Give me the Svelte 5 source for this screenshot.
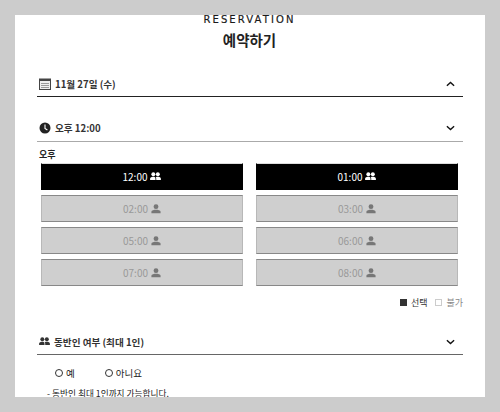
<script>
  const slots = [
    { time: '12:00', open: true },
    { time: '01:00', open: true },
    { time: '02:00', open: false },
    { time: '03:00', open: false },
    { time: '05:00', open: false },
    { time: '06:00', open: false },
    { time: '07:00', open: false },
    { time: '08:00', open: false }
  ];
</script>

{#snippet person()}
  <svg class="ico" viewBox="0 0 12 12" width="10" height="10">
    <circle cx="6" cy="3.2" r="2.9" fill="#777" />
    <path d="M0.5 11 V9.4 C0.5 7.6 4 6.9 6 6.9 S11.5 7.6 11.5 9.4 V11 Z" fill="#777" />
  </svg>
{/snippet}

{#snippet people()}
  <svg class="ico" viewBox="0 0 12 10" width="11" height="9">
    <circle cx="3.6" cy="2.4" r="2.2" fill="currentColor" />
    <circle cx="8.6" cy="2.4" r="2.2" fill="currentColor" />
    <path d="M0 9 V7.4 C0 6 2 5.4 3.6 5.4 S6 6 6 7.4 V9 Z" fill="currentColor" />
    <path d="M6.8 9 V7.2 C6.8 6.6 6.6 6.1 6.2 5.8 C6.9 5.5 7.8 5.4 8.6 5.4 C10.2 5.4 12 6 12 7.4 V9 Z" fill="currentColor" />
  </svg>
{/snippet}

{#snippet chevron(up)}
  <svg class="chev" viewBox="0 0 10 6" width="9" height="6">
    <path d={up ? 'M1 5 L5 1.4 L9 5' : 'M1 1 L5 4.6 L9 1'} fill="none" stroke="#111" stroke-width="1.6" />
  </svg>
{/snippet}

<div class="panel">
  <header>
    <div class="brand">RESERVATION</div>
    <h1>예약하기</h1>
  </header>

  <section class="row date">
    <div class="label">
      <svg class="ico" viewBox="0 0 12 12" width="12" height="12">
        <rect x="0.5" y="1" width="11" height="10.5" fill="#eee" stroke="#444" />
        <rect x="0.5" y="1" width="11" height="2" fill="#444" />
        <path d="M2.5 5.5h7M2.5 7.5h7M2.5 9.5h7" stroke="#444" stroke-dasharray="1 1" />
      </svg>
      <span>11월 27일 (수)</span>
    </div>
    {@render chevron(true)}
  </section>

  <section class="row time">
    <div class="label">
      <svg class="ico" viewBox="0 0 12 12" width="12" height="12">
        <circle cx="6" cy="6" r="5.5" fill="#222" />
        <path d="M6 2.6 V6.4 L8.4 8" fill="none" stroke="#fff" stroke-width="1.1" />
      </svg>
      <span>오후 12:00</span>
    </div>
    {@render chevron(false)}
  </section>

  <div class="period">오후</div>
  <div class="slots">
    {#each slots as slot}
      <button class="slot" class:open={slot.open}>
        <span>{slot.time}</span>
        {#if slot.open}
          {@render people()}
        {:else}
          {@render person()}
        {/if}
      </button>
    {/each}
  </div>

  <div class="legend">
    <i class="box on"></i><span class="sel">선택</span>
    <i class="box"></i><span class="off">불가</span>
  </div>

  <section class="row companion">
    <div class="label">
      {@render people()}
      <span>동반인 여부 (최대 1인)</span>
    </div>
    {@render chevron(false)}
  </section>

  <div class="radios">
    <label><i class="radio"></i>예</label>
    <label><i class="radio"></i>아니요</label>
  </div>
  <p class="note">- 동반인 최대 1인까지 가능합니다.</p>
</div>

<style>
  :global(body) {
    margin: 0;
    background: #ccc;
  }

  .panel {
    box-sizing: border-box;
    width: 470px;
    height: 382px;
    margin: 15px;
    padding: 0 22px;
    overflow: hidden;
    background: #fff;
    color: #222;
    font-family: "Noto Sans CJK KR", "Noto Sans", sans-serif;
    font-size: 9px;
  }

  header {
    padding-right: 1px;
    text-align: center;
  }

  .brand {
    height: 10px;
    font-family: "DejaVu Sans", sans-serif;
    font-size: 10px;
    line-height: 9px;
    letter-spacing: 2.1px;
    color: #1a1a1a;
    -webkit-text-stroke: 0.2px #1a1a1a;
  }

  h1 {
    margin: 4px 0 0;
    font-size: 14.5px;
    line-height: 21px;
    font-weight: 700;
  }

  .row {
    display: flex;
    align-items: center;
    justify-content: space-between;
    box-sizing: border-box;
    padding: 0 8px 0 2px;
    border-bottom: 1px solid #222;
  }

  .date {
    height: 41px;
    margin-top: 6px;
    padding-top: 16px;
  }

  .time {
    height: 45px;
    padding-top: 18px;
    border-bottom: 1px solid #aaa;
  }

  .companion {
    height: 26px;
    margin-top: 20px;
    border-bottom: 1px solid #666;
  }

  .label {
    display: flex;
    align-items: center;
    gap: 4px;
    font-size: 9.6px;
    font-weight: 700;
    color: #333;
  }

  .ico {
    display: block;
    flex: none;
  }

  .period {
    margin: 6px 0 0 2px;
    font-size: 9px;
    line-height: 13px;
    font-weight: 700;
  }

  .slots {
    display: grid;
    grid-template-columns: 202px 202px;
    column-gap: 13px;
    row-gap: 5px;
    margin: 2px 0 0 4px;
  }

  .slot {
    display: flex;
    align-items: center;
    justify-content: center;
    gap: 3px;
    height: 27px;
    padding: 0;
    border: 1px solid;
    border-color: #888 #b8b8b8;
    background: #cfcfcf;
    color: #999;
    font: inherit;
    font-size: 10px;
  }

  .slot.open {
    border-color: #ddd #000 #000;
    background: #000;
    color: #fff;
  }

  .legend {
    display: flex;
    justify-content: flex-end;
    align-items: center;
    margin-top: 9px;
    height: 14px;
    font-size: 9px;
  }

  .box {
    box-sizing: border-box;
    width: 7px;
    height: 7px;
    margin-right: 4px;
    border: 1px solid #ccc;
  }

  .box.on {
    background: #333;
    border-color: #333;
  }

  .sel {
    margin-right: 8px;
    color: #333;
  }

  .off {
    color: #888;
  }

  .radios {
    display: flex;
    gap: 30px;
    margin: 11px 0 0 18px;
    font-size: 9.5px;
    line-height: 14px;
  }

  .radios label {
    display: flex;
    align-items: center;
    gap: 3px;
  }

  .radio {
    box-sizing: border-box;
    width: 8px;
    height: 8px;
    border: 1px solid #333;
    border-radius: 50%;
  }

  .note {
    margin: 8px 0 0 10px;
    font-size: 8.7px;
    line-height: 12px;
  }
</style>
